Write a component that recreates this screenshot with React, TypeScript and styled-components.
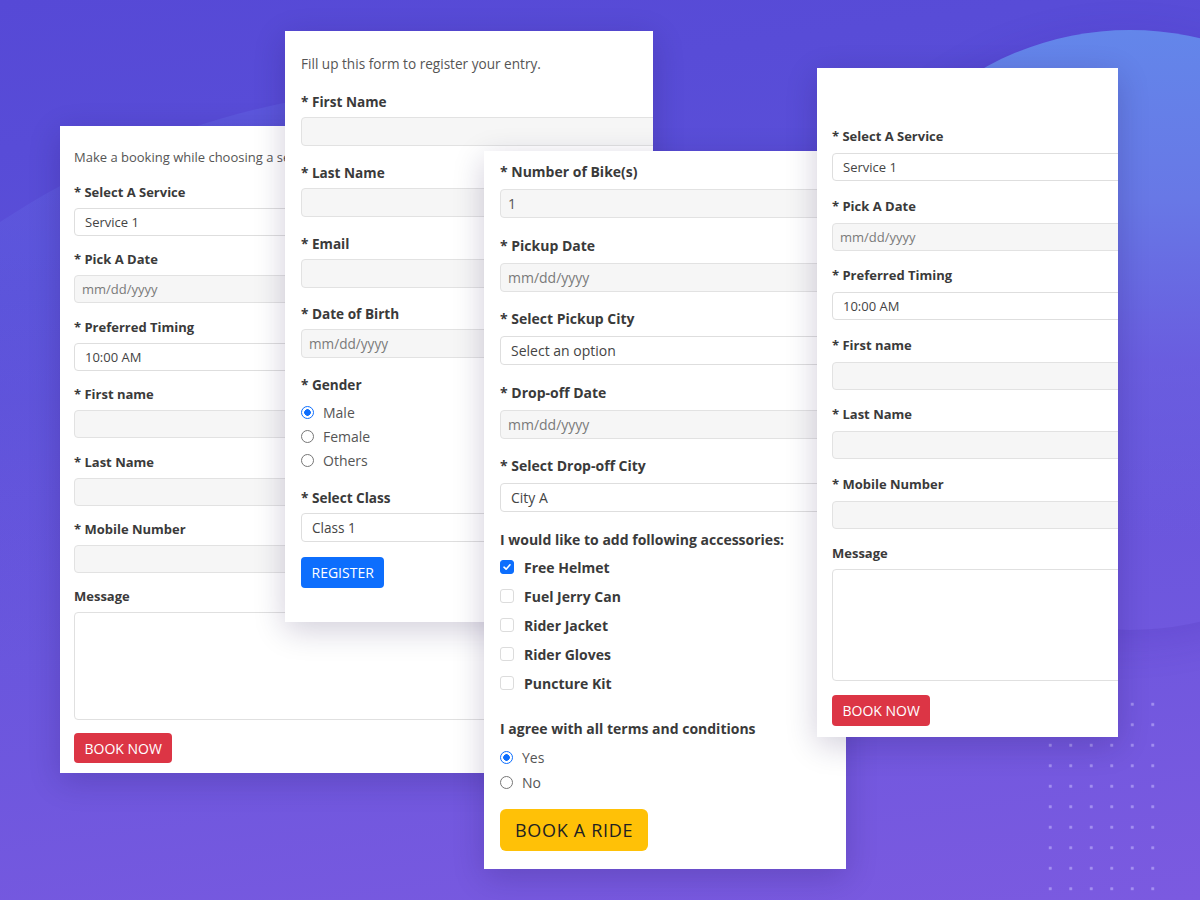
import styled, { createGlobalStyle } from "styled-components";

const GlobalStyle = createGlobalStyle`
  html, body {
    margin: 0;
    padding: 0;
  }
  * {
    box-sizing: border-box;
  }
`

const Canvas = styled.div`
  position: relative;
  width: 1200px;
  height: 900px;
  overflow: hidden;
  background: linear-gradient(172deg, #5649d6 0%, #5a4fd8 28%, #6a56dd 62%, #7b5ae0 100%);
  font-family: "Open Sans", "Liberation Sans", sans-serif;
`

const Blob = styled.div`
  position: absolute;
  left: 830px;
  top: 30px;
  width: 600px;
  height: 600px;
  border-radius: 50%;
  background: linear-gradient(180deg, #6386ea 0%, #6878e6 28%, rgba(110, 100, 226, 0.6) 55%, rgba(112, 90, 222, 0) 85%);
  box-shadow: -6px 10px 40px rgba(60, 30, 160, 0.18);
`

const Wave = styled.svg`
  position: absolute;
  left: 0;
  top: 0;
`

const Dots = styled.div`
  position: absolute;
  left: 1040px;
  top: 694px;
  width: 123px;
  height: 206px;
  background-image: radial-gradient(circle, rgba(200, 188, 255, 0.55) 1.3px, transparent 1.8px);
  background-size: 20.5px 20.5px;
`

const Card = styled.div<{ $left: number; $top: number; $width: number; $height: number; $pad: string; $z: number; $font: number }>`
  position: absolute;
  left: ${p => p.$left}px;
  top: ${p => p.$top}px;
  width: ${p => p.$width}px;
  height: ${p => p.$height}px;
  padding: ${p => p.$pad};
  z-index: ${p => p.$z};
  background: #fff;
  overflow: hidden;
  font-size: ${p => p.$font}px;
  box-shadow: 0 8px 30px rgba(25, 10, 70, 0.2);
`

const Form = styled.div<{ $width?: number }>`
  display: flex;
  flex-direction: column;
  width: ${p => (p.$width ? `${p.$width}px` : "100%")};
`

const Intro = styled.p<{ $mb: number }>`
  margin: 0 0 ${p => p.$mb}px;
  font-size: 1em;
  line-height: 21px;
  color: #555;
  white-space: nowrap;
`

const Field = styled.div<{ $gap: number; $mb: number }>`
  display: flex;
  flex-direction: column;
  gap: ${p => p.$gap}px;
  margin-bottom: ${p => p.$mb}px;
`

const Label = styled.div`
  font-size: 1em;
  line-height: 21px;
  font-weight: 700;
  color: #3a3a3a;
  white-space: nowrap;
`

const Input = styled.input<{ $h: number }>`
  display: block;
  width: 100%;
  height: ${p => p.$h}px;
  margin: 0;
  padding: 0 7px;
  border: 1px solid #e2e2e2;
  border-radius: 4px;
  background: #f6f6f6;
  font-family: inherit;
  font-size: 1em;
  color: #555;
  outline: none;

  &::placeholder {
    color: #7a7a7a;
  }
`

const Select = styled.select<{ $h: number }>`
  display: block;
  width: 100%;
  height: ${p => p.$h}px;
  margin: 0;
  padding: 0 10px;
  border: 1px solid #dedede;
  border-radius: 4px;
  background: #fff;
  font-family: inherit;
  font-size: 1em;
  color: #444;
  appearance: none;
  outline: none;
`

const TextArea = styled.textarea<{ $h: number }>`
  display: block;
  width: 100%;
  height: ${p => p.$h}px;
  margin: 0;
  border: 1px solid #e0e0e0;
  border-radius: 4px;
  background: #fff;
  resize: none;
  outline: none;
`

const OptionList = styled.div`
  display: flex;
  flex-direction: column;
`

const OptionRow = styled.label<{ $h: number; $bold?: boolean; $gap: number }>`
  display: flex;
  align-items: center;
  gap: ${p => p.$gap}px;
  height: ${p => p.$h}px;
  font-size: 14px;
  font-weight: ${p => (p.$bold ? 700 : 400)};
  color: ${p => (p.$bold ? "#3a3a3a" : "#555")};
`

const Box = styled.span<{ $on?: boolean }>`
  display: inline-flex;
  align-items: center;
  justify-content: center;
  width: 14px;
  height: 14px;
  border-radius: 3px;
  border: 1px solid ${p => (p.$on ? "#0d6efd" : "#dcdcdc")};
  background: ${p => (p.$on ? "#0d6efd" : "#fff")};
`

const Dot = styled.span<{ $on?: boolean }>`
  display: inline-block;
  width: 13px;
  height: 13px;
  border-radius: 50%;
  border: ${p => (p.$on ? "1.5px solid #0d6efd" : "1px solid #767676")};
  background: ${p => (p.$on ? "radial-gradient(circle, #0d6efd 0 3px, #fff 3.6px)" : "#fff")};
`

const tones = {
  red: { bg: "#dc3545", fg: "#fff" },
  blue: { bg: "#0d6efd", fg: "#fff" },
  yellow: { bg: "#ffc107", fg: "#222" },
}

const Button = styled.button<{ $tone: keyof typeof tones; $h: number; $big?: boolean }>`
  align-self: flex-start;
  height: ${p => p.$h}px;
  padding: 0 ${p => (p.$big ? 15 : 10.5)}px;
  border: none;
  border-radius: ${p => (p.$big ? 6 : 4)}px;
  background: ${p => tones[p.$tone].bg};
  color: ${p => tones[p.$tone].fg};
  font-family: inherit;
  font-size: ${p => (p.$big ? 18 : 14)}px;
  letter-spacing: ${p => (p.$big ? 0.7 : 0)}px;
  text-transform: uppercase;
  cursor: pointer;
`

const Check = () => (
  <svg width="10" height="10" viewBox="0 0 10 10">
    <path d="M2 5.2 L4.1 7.2 L8 2.8" fill="none" stroke="#fff" strokeWidth="1.6" strokeLinecap="round" strokeLinejoin="round"/>
  </svg>
)

type Spec = { label: string; kind: "input" | "select"; value?: string; placeholder?: string }

const FieldList = ({ items, gap, h, mb }: { items: Spec[]; gap: number; h: number; mb: number }) => (
  <>
    {items.map(it => (
      <Field key={it.label} $gap={gap} $mb={mb}>
        <Label>{it.label}</Label>
        {it.kind === "select" ? (
          <Select $h={h} defaultValue={it.value}>
            <option>{it.value}</option>
          </Select>
        ) : (
          <Input $h={h} placeholder={it.placeholder} defaultValue={it.value}/>
        )}
      </Field>
    ))}
  </>
)

const bookingFields: Spec[] = [
  { label: "* Select A Service", kind: "select", value: "Service 1" },
  { label: "* Pick A Date", kind: "input", placeholder: "mm/dd/yyyy" },
  { label: "* Preferred Timing", kind: "select", value: "10:00 AM" },
  { label: "* First name", kind: "input" },
  { label: "* Last Name", kind: "input" },
  { label: "* Mobile Number", kind: "input" },
]

const accessories = ["Free Helmet", "Fuel Jerry Can", "Rider Jacket", "Rider Gloves", "Puncture Kit"]

export default function App() {
  return (
    <Canvas>
      <GlobalStyle/>
      <Blob/>
      <Wave width="1200" height="900" viewBox="0 0 1200 900">
        <defs>
          <linearGradient id="waveFade" x1="0" y1="0" x2="0" y2="1">
            <stop offset="0" stopColor="#7896ff" stopOpacity="0.16"/>
            <stop offset="0.5" stopColor="#7896ff" stopOpacity="0.04"/>
            <stop offset="1" stopColor="#7896ff" stopOpacity="0"/>
          </linearGradient>
        </defs>
        <path d="M0 222 C 110 150 230 104 360 92 C 430 86 470 110 500 151 L 500 700 L 0 700 Z" fill="url(#waveFade)"/>
      </Wave>
      <Dots/>

      <Card $left={60} $top={126} $width={450} $height={647} $pad="21px 0 10px 14px" $z={1} $font={13}>
        <Form $width={430}>
          <Intro $mb={14}>Make a booking while choosing a service.</Intro>
          <FieldList items={bookingFields} gap={5} h={28} mb={13.4}/>
          <Field $gap={5} $mb={13}>
            <Label>Message</Label>
            <TextArea $h={108}/>
          </Field>
          <Button $tone="red" $h={30}>Book Now</Button>
        </Form>
      </Card>

      <Card $left={285} $top={31} $width={368} $height={591} $pad="22px 0 0 16px" $z={2} $font={13.6}>
        <Form $width={380}>
          <Intro $mb={17}>Fill up this form to register your entry.</Intro>
          <FieldList
            items={[
              { label: "* First Name", kind: "input" },
              { label: "* Last Name", kind: "input" },
              { label: "* Email", kind: "input" },
              { label: "* Date of Birth", kind: "input", placeholder: "mm/dd/yyyy" },
            ]}
            gap={5} h={29} mb={15.75}
          />
          <Field $gap={5} $mb={15}>
            <Label>* Gender</Label>
            <OptionList>
              {["Male", "Female", "Others"].map((g, i) => (
                <OptionRow key={g} $h={24} $gap={9}>
                  <Dot $on={i === 0}/>
                  {g}
                </OptionRow>
              ))}
            </OptionList>
          </Field>
          <FieldList items={[{ label: "* Select Class", kind: "select", value: "Class 1" }]} gap={5} h={29} mb={15}/>
          <Button $tone="blue" $h={31}>Register</Button>
        </Form>
      </Card>

      <Card $left={484} $top={151} $width={362} $height={718} $pad="10px 16px 0 16px" $z={3} $font={14}>
        <Form>
          <FieldList
            items={[
              { label: "* Number of Bike(s)", kind: "input", value: "1" },
              { label: "* Pickup Date", kind: "input", placeholder: "mm/dd/yyyy" },
              { label: "* Select Pickup City", kind: "select", value: "Select an option" },
              { label: "* Drop-off Date", kind: "input", placeholder: "mm/dd/yyyy" },
              { label: "* Select Drop-off City", kind: "select", value: "City A" },
            ]}
            gap={7} h={29} mb={16.5}
          />
          <Field $gap={3} $mb={20}>
            <Label>I would like to add following accessories:</Label>
            <OptionList>
              {accessories.map((a, i) => (
                <OptionRow key={a} $h={29} $gap={10} $bold>
                  <Box $on={i === 0}>{i === 0 && <Check/>}</Box>
                  {a}
                </OptionRow>
              ))}
            </OptionList>
          </Field>
          <Field $gap={6} $mb={14.5}>
            <Label>I agree with all terms and conditions</Label>
            <OptionList>
              {["Yes", "No"].map((a, i) => (
                <OptionRow key={a} $h={25} $gap={9}>
                  <Dot $on={i === 0}/>
                  {a}
                </OptionRow>
              ))}
            </OptionList>
          </Field>
          <Button $tone="yellow" $h={42} $big>Book A Ride</Button>
        </Form>
      </Card>

      <Card $left={817} $top={68} $width={301} $height={669} $pad="58px 0 0 15px" $z={4} $font={13}>
        <Form $width={330}>
          <FieldList items={bookingFields} gap={6} h={28} mb={14.5}/>
          <Field $gap={5} $mb={14}>
            <Label>Message</Label>
            <TextArea $h={112}/>
          </Field>
          <Button $tone="red" $h={31}>Book Now</Button>
        </Form>
      </Card>
    </Canvas>
  )
}
